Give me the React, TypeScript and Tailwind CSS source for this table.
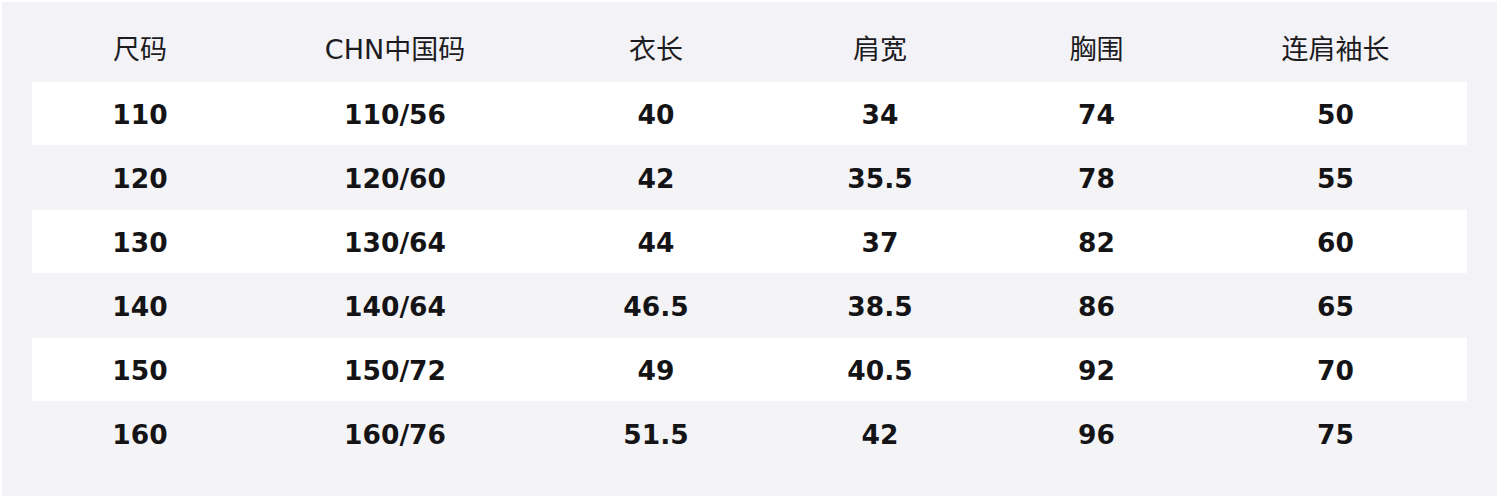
import React from "react";

const headers = ["尺码", "CHN中国码", "衣长", "肩宽", "胸围", "连肩袖长"];
const rows = [
  ["110", "110/56", "40", "34", "74", "50"],
  ["120", "120/60", "42", "35.5", "78", "55"],
  ["130", "130/64", "44", "37", "82", "60"],
  ["140", "140/64", "46.5", "38.5", "86", "65"],
  ["150", "150/72", "49", "40.5", "92", "70"],
  ["160", "160/76", "51.5", "42", "96", "75"],
];

export default function App() {
  return (
    <div
      className="w-[1500px] h-[499px] bg-white pt-[2px] pl-[2px]"
      style={{ fontFamily: '"DejaVu Sans", "Noto Sans CJK SC", sans-serif' }}
    >
      <div className="w-[1495px] h-[494px] bg-[#f3f2f7] px-[30px] pb-[30px]">
        <div className="grid grid-cols-[216px_294px_228px_220px_213px_265px] h-[80px] pt-[16px] items-center text-[27px] text-[#1c1c1e]">
          {headers.map((h) => (
            <div key={h} className="text-center whitespace-nowrap">
              {h}
            </div>
          ))}
        </div>
        {rows.map((r, i) => (
          <div
            key={i}
            className={
              i % 2 === 0
                ? "grid grid-cols-[216px_294px_228px_220px_213px_265px] h-[63px] pt-[2px] items-center bg-white text-[26.5px] font-bold text-[#141416]"
                : "grid grid-cols-[216px_294px_228px_220px_213px_265px] h-[65px] pt-[2px] items-center bg-[#f4f4f7] text-[26.5px] font-bold text-[#141416]"
            }
          >
            {r.map((c, j) => (
              <div key={j} className="text-center whitespace-nowrap">
                {c}
              </div>
            ))}
          </div>
        ))}
      </div>
    </div>
  );
}
